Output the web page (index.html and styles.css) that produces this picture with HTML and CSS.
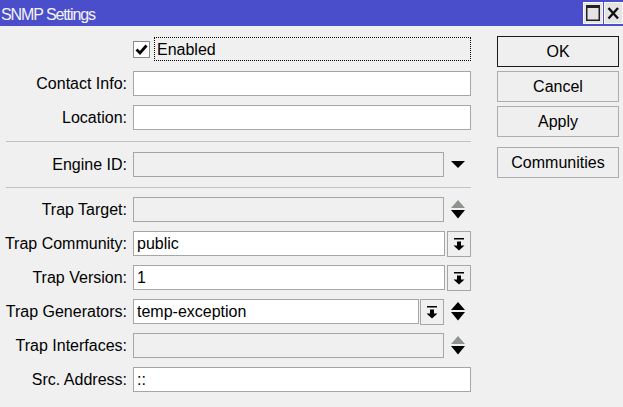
FILE: index.html
```html
<!DOCTYPE html>
<html lang="en">
  <head>
    <meta charset="UTF-8">
    <meta name="viewport" content="width=device-width, initial-scale=1.0">
    <title>SNMP Settings</title>
    <link rel="stylesheet" href="styles.css">
  </head>
  <body>
    <div class="window">
      <div class="titlebar">
        <span class="title">SNMP Settings</span>
        <div class="win-buttons">
          <span class="win-btn">
            <svg width="20" height="22" viewBox="0 0 20 22">
              <rect x="0.5" y="0.5" width="19" height="21" fill="#e4e4e4" stroke="#f8f8f8"/>
              <rect x="3.75" y="3.75" width="12.5" height="14.5" fill="#e4e4e4" stroke="#222" stroke-width="1.5"/>
              <rect x="3" y="3" width="14" height="3" fill="#222"/>
            </svg>
          </span>
          <span class="win-btn">
            <svg width="19" height="22" viewBox="0 0 19 22">
              <rect x="0.5" y="0.5" width="18" height="21" fill="#e4e4e4" stroke="#f8f8f8"/>
              <path d="M4.5 6 L14 16.5 M14 6 L4.5 16.5" stroke="#111" stroke-width="2.4"/>
            </svg>
          </span>
        </div>
      </div>

      <div class="content">
        <div class="form">
          <div class="row check-row">
            <div class="label"></div>
            <div class="field">
              <span class="checkbox">
                <svg width="15" height="15" viewBox="0 0 15 15">
                  <path d="M2.5 7.5 L6 11 L12.5 3.5" fill="none" stroke="#000" stroke-width="2.8"/>
                </svg>
              </span>
              <span class="focus-box">Enabled</span>
            </div>
          </div>

          <div class="row">
            <div class="label">Contact Info:</div>
            <div class="field"><input class="input" type="text" value=""></div>
          </div>
          <div class="row">
            <div class="label">Location:</div>
            <div class="field"><input class="input" type="text" value=""></div>
          </div>

          <div class="separator"></div>

          <div class="row">
            <div class="label">Engine ID:</div>
            <div class="field">
              <input class="input disabled" type="text" value="" disabled>
              <span class="arrow-slot">
                <svg width="14" height="7" viewBox="0 0 14 7"><polygon points="0,0 14,0 7,7" fill="#000"/></svg>
              </span>
            </div>
          </div>

          <div class="separator sep-lower"></div>

          <div class="row">
            <div class="label">Trap Target:</div>
            <div class="field">
              <input class="input disabled" type="text" value="" disabled>
              <span class="arrow-slot">
                <svg width="14" height="19" viewBox="0 0 14 19">
                  <polygon points="7,0 14,8 0,8" fill="#8e938e"/>
                  <polygon points="0,10 14,10 7,18.5" fill="#000"/>
                </svg>
              </span>
            </div>
          </div>
          <div class="row">
            <div class="label">Trap Community:</div>
            <div class="field">
              <input class="input" type="text" value="public">
              <span class="drop-btn">
                <svg width="12" height="13" viewBox="0 0 12 13">
                  <rect x="1" y="0" width="10" height="1.5" fill="#000"/>
                  <rect x="4" y="3.5" width="4" height="4.5" fill="#000"/>
                  <polygon points="0.5,7.5 11.5,7.5 6,12.5" fill="#000"/>
                </svg>
              </span>
            </div>
          </div>
          <div class="row">
            <div class="label">Trap Version:</div>
            <div class="field">
              <input class="input" type="text" value="1">
              <span class="drop-btn">
                <svg width="12" height="13" viewBox="0 0 12 13">
                  <rect x="1" y="0" width="10" height="1.5" fill="#000"/>
                  <rect x="4" y="3.5" width="4" height="4.5" fill="#000"/>
                  <polygon points="0.5,7.5 11.5,7.5 6,12.5" fill="#000"/>
                </svg>
              </span>
            </div>
          </div>
          <div class="row">
            <div class="label">Trap Generators:</div>
            <div class="field">
              <input class="input" type="text" value="temp-exception">
              <span class="drop-btn small-gap">
                <svg width="12" height="13" viewBox="0 0 12 13">
                  <rect x="1" y="0" width="10" height="1.5" fill="#000"/>
                  <rect x="4" y="3.5" width="4" height="4.5" fill="#000"/>
                  <polygon points="0.5,7.5 11.5,7.5 6,12.5" fill="#000"/>
                </svg>
              </span>
              <span class="arrow-slot">
                <svg width="14" height="19" viewBox="0 0 14 19">
                  <polygon points="7,0 14,8 0,8" fill="#000"/>
                  <polygon points="0,10 14,10 7,18.5" fill="#000"/>
                </svg>
              </span>
            </div>
          </div>
          <div class="row">
            <div class="label">Trap Interfaces:</div>
            <div class="field">
              <input class="input disabled" type="text" value="" disabled>
              <span class="arrow-slot">
                <svg width="14" height="19" viewBox="0 0 14 19">
                  <polygon points="7,0 14,8 0,8" fill="#8e938e"/>
                  <polygon points="0,10 14,10 7,18.5" fill="#000"/>
                </svg>
              </span>
            </div>
          </div>
          <div class="row">
            <div class="label">Src. Address:</div>
            <div class="field"><input class="input" type="text" value="::"></div>
          </div>
        </div>

        <div class="buttons">
          <button class="btn default">OK</button>
          <button class="btn">Cancel</button>
          <button class="btn">Apply</button>
          <button class="btn extra">Communities</button>
        </div>
      </div>
    </div>
  </body>
</html>
```

FILE: styles.css
```css
body {
    margin: 0;
    background-color: #f0f0f0;
    font-family: "Liberation Sans", Arial, sans-serif;
    font-size: 16px;
    color: #000;
}

.window {
    width: 623px;
    height: 407px;
    overflow: hidden;
}

/* title bar */
.titlebar {
    height: 26px;
    background-color: #4a4ecb;
    display: flex;
    justify-content: space-between;
}

.title {
    color: #f4f4f4;
    font-size: 16px;
    letter-spacing: -1.1px;
    line-height: 24px;
    padding-top: 3px;
    padding-left: 1px;
}

.win-buttons {
    display: flex;
    gap: 1px;
    padding-top: 2px;
}

.win-btn svg {
    display: block;
}

/* main area */
.content {
    display: flex;
}

.form {
    width: 471px;
    padding-top: 11px;
}

.row {
    display: flex;
    align-items: center;
    height: 25px;
    margin-bottom: 9px;
}

.check-row {
    height: 24px;
    margin-bottom: 10px;
}

.label {
    width: 127px;
    flex-shrink: 0;
    text-align: right;
    margin-right: 6px;
    white-space: nowrap;
}

.field {
    display: flex;
    align-items: center;
    width: 338px;
    height: 100%;
}

.input {
    flex: 1;
    min-width: 0;
    box-sizing: border-box;
    height: 25px;
    margin: 0;
    border: 1px solid #a6a6a6;
    background-color: #fff;
    font: inherit;
    color: #000;
    padding: 0 3px;
    outline: none;
}

.input.disabled {
    background-color: #f0f0f0;
}

.arrow-slot {
    width: 26px;
    flex-shrink: 0;
    display: flex;
    justify-content: center;
    padding-left: 1px;
}

.arrow-slot svg {
    display: block;
}

.drop-btn {
    width: 24px;
    height: 26px;
    box-sizing: border-box;
    flex-shrink: 0;
    margin-left: 2px;
    border: 1px solid #a6a6a6;
    background-color: #f0f0f0;
    display: flex;
    align-items: center;
    justify-content: center;
}

.drop-btn.small-gap {
    margin-left: 1px;
}

.drop-btn svg {
    display: block;
    margin-top: 1px;
}

/* enabled checkbox */
.checkbox {
    width: 17px;
    height: 17px;
    box-sizing: border-box;
    border: 1px solid #8a8a8a;
    background-color: #fff;
    display: flex;
    align-items: center;
    justify-content: center;
    margin-right: 4px;
}

.focus-box {
    flex: 1;
    height: 24px;
    box-sizing: border-box;
    border: 1px dotted #000;
    padding-left: 2px;
    padding-top: 2px;
    line-height: 20px;
}

.separator {
    height: 1px;
    background-color: #c2c2c2;
    margin: 11px 0 10px 6px;
}

.sep-lower {
    margin-top: 10px;
    margin-bottom: 9px;
}

/* side buttons */
.buttons {
    display: flex;
    flex-direction: column;
    margin-left: 26px;
    padding-top: 10px;
}

.btn {
    width: 122px;
    height: 31px;
    margin-bottom: 4px;
    border: 1px solid #adadad;
    background-color: #efefef;
    font: inherit;
    color: #000;
    padding: 0;
}

.btn.default {
    border-color: #1a1a1a;
}

.btn.extra {
    margin-top: 6px;
}
```
